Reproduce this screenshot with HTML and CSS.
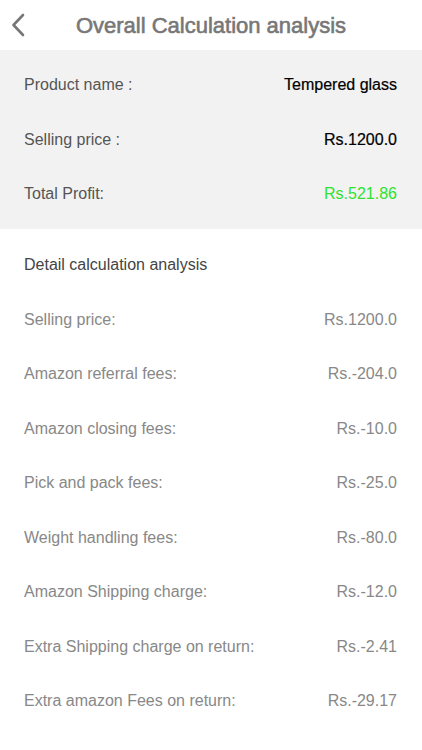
FILE: index.html
```html
<!DOCTYPE html>
<html>
<head>
<meta charset="utf-8">
<link rel="stylesheet" href="styles.css">
</head>
<body>
<header class="nav">
  <span class="back"><svg width="14" height="24" viewBox="0 0 14 24"><path d="M12 2 L2.5 12 L12 22" fill="none" stroke="#777" stroke-width="2.6" stroke-linecap="round" stroke-linejoin="round"/></svg></span>
  <h1 class="title">Overall Calculation analysis</h1>
</header>
<section class="summary">
  <div class="row"><span class="lbl">Product name :</span><span class="val">Tempered glass</span></div>
  <div class="row"><span class="lbl">Selling price :</span><span class="val">Rs.1200.0</span></div>
  <div class="row"><span class="lbl">Total Profit:</span><span class="val profit">Rs.521.86</span></div>
</section>
<section class="detail">
  <div class="row head"><span>Detail calculation analysis</span></div>
  <div class="row"><span>Selling price:</span><span>Rs.1200.0</span></div>
  <div class="row"><span>Amazon referral fees:</span><span>Rs.-204.0</span></div>
  <div class="row"><span>Amazon closing fees:</span><span>Rs.-10.0</span></div>
  <div class="row"><span>Pick and pack fees:</span><span>Rs.-25.0</span></div>
  <div class="row"><span>Weight handling fees:</span><span>Rs.-80.0</span></div>
  <div class="row"><span>Amazon Shipping charge:</span><span>Rs.-12.0</span></div>
  <div class="row"><span>Extra Shipping charge on return:</span><span>Rs.-2.41</span></div>
  <div class="row"><span>Extra amazon Fees on return:</span><span>Rs.-29.17</span></div>
</section>
</body>
</html>
```
FILE: styles.css
```css
* { box-sizing: border-box; }
html, body { margin: 0; padding: 0; }
body {
  width: 422px;
  height: 750px;
  overflow: hidden;
  background: #fff;
  font-family: "Liberation Sans", Arial, sans-serif;
}
.nav {
  height: 50px;
  position: relative;
  display: flex;
  align-items: center;
  justify-content: center;
}
.back {
  position: absolute;
  left: 11px;
  top: 13px;
  display: block;
  line-height: 0;
}
.title {
  margin: 0;
  font-size: 22px;
  font-weight: normal;
  -webkit-text-stroke: 0.6px #777;
  color: #777;
  padding-top: 1px;
}
.summary {
  background: #f2f2f2;
  padding: 8px 0 7px;
}
.row {
  height: 54.5px;
  display: flex;
  align-items: center;
  justify-content: space-between;
  padding: 0 25px 0 24px;
  font-size: 16px;
}
.summary .lbl { color: #555; }
.summary .val { color: #000; -webkit-text-stroke: 0.2px #000; }
.summary .profit { color: #2ee22e; -webkit-text-stroke: 0; }
.detail {
  padding-top: 9.5px;
}
.detail .row { color: #888; }
.detail .row.head { color: #444; }
```
